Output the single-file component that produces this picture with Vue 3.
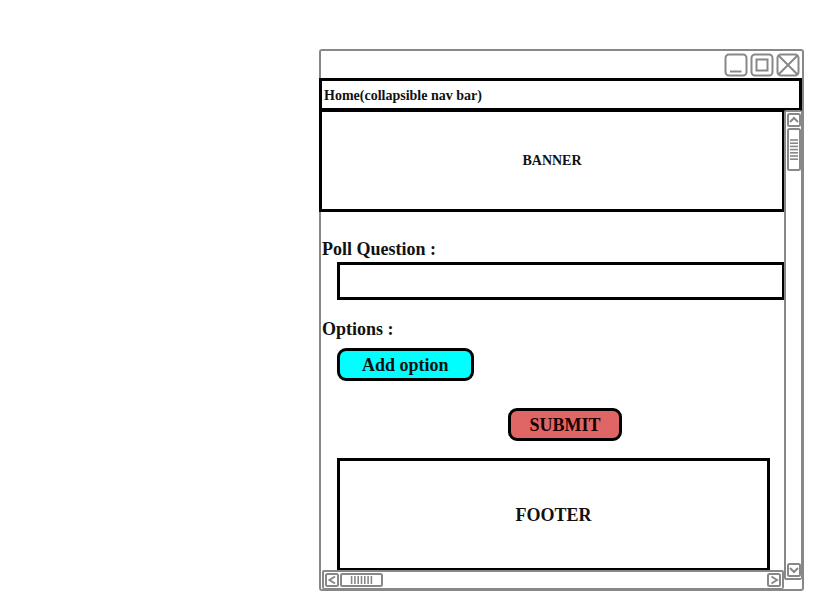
<script setup>
import { ref } from 'vue'

const question = ref('')
const grip = [0, 1, 2, 3, 4, 5, 6]
</script>

<template>
  <div class="page">
    <section class="window">
      <header class="titlebar">
        <button class="icon" type="button" aria-label="Minimize">
          <svg width="24" height="24" viewBox="0 0 24 24">
            <rect x="1.5" y="1.5" width="21" height="21" rx="3.5" />
            <path d="M6 18.5H17.5" />
          </svg>
        </button>
        <button class="icon" type="button" aria-label="Maximize">
          <svg width="24" height="24" viewBox="0 0 24 24">
            <rect x="1.5" y="1.5" width="21" height="21" rx="3.5" />
            <rect x="6.5" y="6.5" width="11" height="11" />
          </svg>
        </button>
        <button class="icon" type="button" aria-label="Close">
          <svg width="24" height="24" viewBox="0 0 24 24">
            <rect x="1.5" y="1.5" width="21" height="21" rx="3.5" />
            <path d="M2.5 2.5L21.5 21.5M21.5 2.5L2.5 21.5" />
          </svg>
        </button>
      </header>

      <nav class="nav">Home(collapsible nav bar)</nav>

      <div class="body">
        <div class="column">
          <div class="banner">BANNER</div>
          <form class="form" @submit.prevent>
            <label class="label" for="question">Poll Question :</label>
            <input id="question" v-model="question" class="field" type="text" />
            <p class="label options">Options :</p>
            <button class="action add" type="button">Add option</button>
            <div class="submit-row">
              <button class="action submit" type="submit">SUBMIT</button>
            </div>
          </form>
          <footer class="footer">FOOTER</footer>
          <div class="hscroll">
            <button class="icon" type="button" aria-label="Scroll left">
              <svg width="14" height="14" viewBox="0 0 14 14">
                <rect x="1" y="1" width="12" height="12" rx="1.5" />
                <path d="M10 3.5L4.5 7L10 10.5" />
              </svg>
            </button>
            <svg class="thumb" width="43" height="14" viewBox="0 0 43 14">
              <rect x="1" y="1" width="41" height="12" rx="1.5" />
              <path v-for="n in grip" :key="n" class="grip" :d="`M${11.6 + n * 3.3} 3V11`" />
            </svg>
            <button class="icon end" type="button" aria-label="Scroll right">
              <svg width="14" height="14" viewBox="0 0 14 14">
                <rect x="1" y="1" width="12" height="12" rx="1.5" />
                <path d="M4.5 3.5L10 7L4.5 10.5" />
              </svg>
            </button>
          </div>
        </div>

        <div class="vscroll">
          <button class="icon" type="button" aria-label="Scroll up">
            <svg width="14" height="14" viewBox="0 0 14 14">
              <rect x="1" y="1" width="12" height="12" rx="1.5" />
              <path d="M3 9L7 5L11 9" />
            </svg>
          </button>
          <svg class="thumb" width="14" height="43" viewBox="0 0 14 43">
            <rect x="1" y="1" width="12" height="41" rx="1.5" />
            <path v-for="n in grip" :key="n" class="grip" :d="`M3 ${12 + n * 3.2}H11`" />
          </svg>
          <button class="icon end-y" type="button" aria-label="Scroll down">
            <svg width="14" height="14" viewBox="0 0 14 14">
              <rect x="1" y="1" width="12" height="12" rx="1.5" />
              <path d="M3 5L7 9L11 5" />
            </svg>
          </button>
        </div>
      </div>
    </section>
  </div>
</template>

<style>
body {
  background: #fff;
}
</style>

<style scoped>
.page {
  box-sizing: border-box;
  min-height: 100vh;
  padding: 49px 19px 19px 319px;
  display: flex;
  font-family: "Liberation Serif", "Times New Roman", serif;
  font-weight: bold;
  font-size: 18px;
  line-height: 20px;
  color: #111;
}

.page * {
  box-sizing: border-box;
}

.window {
  flex: 1;
  min-width: 0;
  display: flex;
  flex-direction: column;
  border: 2px solid #888;
  border-radius: 3px;
}

.titlebar {
  display: flex;
  justify-content: flex-end;
  gap: 2px;
  padding: 2px 2px 1px;
}

.icon {
  display: block;
  flex: none;
  padding: 0;
  border: 0;
  background: none;
}

svg {
  display: block;
  flex: none;
  fill: none;
  stroke: #888;
  stroke-width: 2;
}

.grip {
  stroke-width: 1.6;
}

.nav {
  margin-left: -2px;
  padding: 5px 2px 2px;
  border: 3px solid #000;
  font-size: 14px;
}

.nav,
.banner {
  position: relative;
  line-height: 20px;
}

.body {
  flex: 1;
  display: flex;
  margin-top: -2px;
}

.column {
  flex: 1;
  min-width: 0;
  display: flex;
  flex-direction: column;
}

.banner {
  display: flex;
  align-items: center;
  justify-content: center;
  height: 103px;
  margin: 0 -1px 0 -2px;
  border: 3px solid #000;
  font-size: 14px;
}

.form {
  display: flex;
  flex-direction: column;
  align-items: flex-start;
  padding: 27px 0 17px 1px;
}

.label {
  margin: 0;
}

.field {
  align-self: stretch;
  height: 38px;
  margin: 3px -1px 0 15px;
  padding: 0 8px;
  border: 3px solid #000;
  border-radius: 0;
  background: #fff;
  font: inherit;
  outline: none;
}

.options {
  margin-top: 19px;
}

.action {
  height: 33px;
  padding: 0 18px;
  border: 3px solid #000;
  border-radius: 9px;
  font: inherit;
  color: #111;
}

.add {
  padding: 0 22px;
  margin: 9px 0 0 15px;
  background: #0ff;
}

.submit-row {
  align-self: stretch;
  display: flex;
  justify-content: center;
  padding: 27px 0 0 24px;
}

.submit {
  background: #e06666;
  color: #1a0000;
}

.footer {
  flex: 1;
  min-height: 112px;
  display: flex;
  align-items: center;
  justify-content: center;
  margin: 0 14px -1px 16px;
  border: 3px solid #000;
}

.hscroll,
.vscroll {
  position: relative;
  z-index: 1;
  display: flex;
  gap: 1px;
  border: 2px solid #888;
  border-radius: 2px;
  background: #fff;
}

.hscroll {
  height: 19px;
  margin-left: 1px;
  padding: 1px;
  border-bottom-width: 1px;
}

.vscroll {
  flex-direction: column;
  width: 18px;
  margin: 1px 0 9px;
  padding: 1px 0 1px 1px;
  border-right-width: 1px;
}

.end {
  margin-left: auto;
}

.end-y {
  margin-top: auto;
}
</style>
